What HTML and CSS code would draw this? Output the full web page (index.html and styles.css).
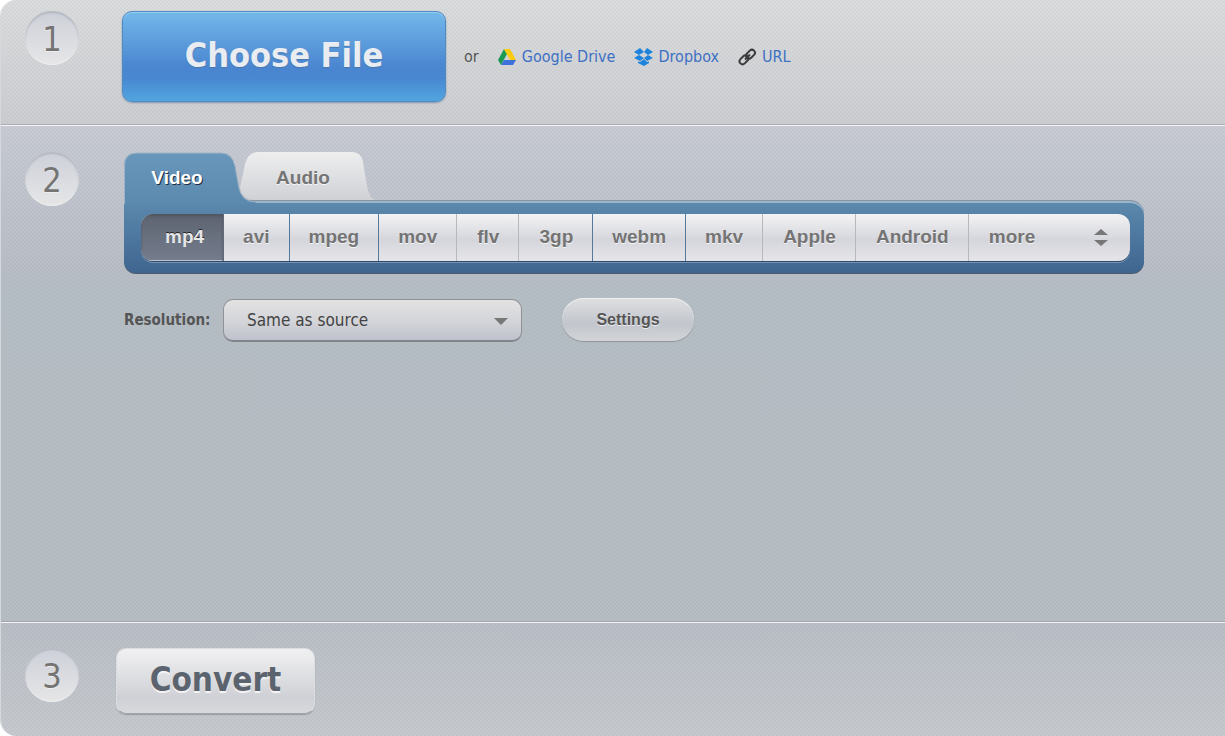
FILE: index.html
```html
<!DOCTYPE html>
<html lang="en">
<head>
  <meta charset="utf-8">
  <title>Video Converter</title>
  <link rel="stylesheet" href="styles.css">
</head>
<body>
<form class="converter">
  <!-- Step 1 -->
  <section class="step step-file">
    <div class="number">1</div>
    <button type="button" class="choose">Choose File</button>
    <div class="sources">
      <span>or</span>
      <a href="#drive">
        <svg width="20" height="18" viewBox="0 0 20 18">
          <path d="M6 1 L0 12 L3 17 L9 6 Z" fill="#1c9a52"/>
          <path d="M6 1 H12 L18 12 H12 Z" fill="#fbcb0d"/>
          <path d="M6 12 H18 L15 17 H3 Z" fill="#3d70dc"/>
        </svg>Google Drive</a>
      <a href="#dropbox">
        <svg width="20" height="18" viewBox="0 0 20 18" fill="#1d83dc">
          <path d="M6 0 L10 4 L5 7 L0 4 Z"/>
          <path d="M13 0 L19 4 L14 7 L10 4 Z"/>
          <path d="M5 7 L10 10 L6 13 L0 10 Z"/>
          <path d="M14 7 L19 10 L13 13 L10 10 Z"/>
          <path d="M10 11 L13 14 L15 13.5 V15 L10 18 L4 15 V13.5 L6 14 Z"/>
        </svg>Dropbox</a>
      <a href="#url">
        <svg width="20" height="18" viewBox="0 0 20 18" fill="none" stroke="#3c3c3c" stroke-width="2">
          <rect x="7.5" y="3.2" width="10" height="6" rx="3" transform="rotate(-45 12.5 6.2)"/>
          <rect x="1" y="8.8" width="10" height="6" rx="3" transform="rotate(-45 6 11.8)"/>
          <path d="M7 11.5 L12 6.5"/>
        </svg>URL</a>
    </div>
  </section>

  <!-- Step 2 -->
  <section class="step step-format">
    <div class="number">2</div>
    <div class="formats">
      <div class="tabs">
        <svg class="tab-shapes" width="260" height="52" viewBox="0 0 260 52">
          <defs>
            <linearGradient id="blue" x1="0" y1="0" x2="0" y2="1">
              <stop offset="0" stop-color="#6997bb"/>
              <stop offset="1" stop-color="#5c89ae"/>
            </linearGradient>
            <linearGradient id="gray" x1="0" y1="0" x2="0" y2="1">
              <stop offset="0" stop-color="#eeeeef"/>
              <stop offset="1" stop-color="#cfd1d5"/>
            </linearGradient>
          </defs>
          <path d="M0 52 V14 Q0 1 13 1 H97 Q108 1 111 14 L115 36 Q118 50 132 50 V52 Z" fill="url(#blue)"/>
          <path d="M.5 52 V14 Q.5 1 13 1 H97 Q108 1 111 14 L115 36 Q118 50 132 50" fill="none" stroke="#9eb3c5"/>
          <path d="M116 36 L121 12 Q124 0 134 0 H228 Q237 0 239 10 L243 34 Q245 46 251 48 H132 Q118 48 116 36 Z" fill="url(#gray)"/>
        </svg>
        <button type="button" class="tab active">Video</button>
        <button type="button" class="tab">Audio</button>
      </div>
      <div class="panel">
        <div class="list">
          <button type="button" class="active">mp4</button>
          <button type="button" class="dark">avi</button>
          <button type="button" class="dark">mpeg</button>
          <button type="button">mov</button>
          <button type="button">flv</button>
          <button type="button" class="dark">3gp</button>
          <button type="button" class="dark">webm</button>
          <button type="button">mkv</button>
          <button type="button">Apple</button>
          <button type="button">Android</button>
          <button type="button" class="more">more
            <svg width="14" height="18" viewBox="0 0 14 18" fill="#777">
              <path d="M7 1 L14 7 H0 Z"/>
              <path d="M0 12 H14 L7 18 Z"/>
            </svg>
          </button>
        </div>
      </div>
      <div class="options">
        <label for="resolution">Resolution:</label>
        <div class="select">
          <select id="resolution">
            <option>Same as source</option>
          </select>
          <svg width="14" height="7" viewBox="0 0 14 7"><path d="M0 0 H14 L7 7 Z" fill="#777"/></svg>
        </div>
        <button type="button" class="settings">Settings</button>
      </div>
    </div>
  </section>

  <!-- Step 3 -->
  <section class="step step-convert">
    <div class="number">3</div>
    <button type="button" class="convert">Convert</button>
  </section>
</form>
</body>
</html>
```
FILE: styles.css
```css
*{
  box-sizing: border-box;
}
body{
  margin: 0;
  background: #fff;
  color: #555;
  font-family: "DejaVu Sans Condensed", Tahoma, sans-serif;
  font-size: 16px;
}
button, select{
  margin: 0;
  border: none;
  font-family: inherit;
  cursor: pointer;
}
svg{
  flex: none;
}
.converter{
  display: flex;
  flex-direction: column;
  min-height: 100vh;
  overflow: hidden;
  border-left: 1px solid #d5d8dc;
  border-radius: 16px 0 0 16px;
}

/* steps */
.step{
  --weave: radial-gradient(rgba(70,80,90,.04) 1px, transparent 1px) 0 0 / 4px 4px, radial-gradient(rgba(70,80,90,.04) 1px, transparent 1px) 2px 2px / 4px 4px;
  display: flex;
  align-items: flex-start;
  padding-left: 24px;
}
.step-file{
  padding-top: 11px;
  padding-bottom: 23px;
  border-bottom: 1px solid #f4f5f6;
  box-shadow: inset 0 -1px #a9abaf;
  background: var(--weave), linear-gradient(#dbdcdd, #cccdd1);
}
.step-format{
  flex: 1;
  padding-top: 26px;
  padding-right: 81px;
  border-bottom: 1px solid #f4f5f6;
  box-shadow: inset 0 -1px #a1a7ac;
  background: var(--weave), linear-gradient(#c8cbd3, #b8bdc6 145px, #b6bec5 165px, #b6bdc3);
}
.step-convert{
  padding-top: 25px;
  padding-bottom: 22px;
  background: var(--weave), linear-gradient(#b9bec6, #c6c9cd);
}
.number{
  flex: none;
  width: 54px;
  height: 54px;
  border-radius: 50%;
  background: linear-gradient(#cdd0d9, #e6e6e7);
  box-shadow: inset 0 2px 2px #b4b7c0, inset 0 -1px 1px #eee;
  color: #747474;
  font-size: 34px;
  line-height: 56px;
  text-align: center;
  text-shadow: 0 1px #eee;
}

/* file sources */
.choose{
  width: 324px;
  height: 91px;
  margin-left: 43px;
  padding-bottom: 4px;
  border: 1px solid #4e8bc5;
  border-radius: 10px;
  background: linear-gradient(#73b8ea, #4a85d0 63%, #4888d1 75%, #51a5de);
  box-shadow: inset 0 1px #9dcdf0, 0 1px 2px #8296ab;
  color: #e9ecf1;
  font-size: 34px;
  font-weight: bold;
  text-shadow: 0 1px 1px #4878ad;
}
.sources{
  display: flex;
  align-items: center;
  gap: 19px;
  height: 91px;
  margin-left: 18px;
}
.sources a{
  display: flex;
  align-items: center;
  gap: 4px;
  color: #3e70c4;
  text-decoration: none;
}

/* format tabs */
.formats{
  flex: 1;
  max-width: 1020px;
  margin-left: 45px;
}
.tabs{
  position: relative;
  display: flex;
  height: 48px;
}
.tab-shapes{
  position: absolute;
  top: 0;
  left: 0;
  z-index: 1;
}
.tab{
  position: relative;
  z-index: 2;
  width: 126px;
  padding: 4px 0 0;
  background: none;
  color: #747474;
  font-family: "Liberation Sans", Arial, sans-serif;
  font-size: 19px;
  font-weight: bold;
  text-shadow: 0 1px #f5f5f5;
}
.tab.active{
  width: 116px;
  padding-right: 10px;
  color: #fff;
  text-shadow: 1px 1px #1d3044;
}
.panel{
  padding: 13px 14px 12px 17px;
  border-top: 1px solid #8794a2;
  border-bottom: 1px solid #4b5b6c;
  border-radius: 0 14px 12px 12px;
  background: linear-gradient(#5c89ae, #3f658f);
  box-shadow: inset 0 2px #9bb5ca;
}
.list{
  display: flex;
  height: 47px;
  overflow: hidden;
  border-radius: 12px;
  background: linear-gradient(#f3f3f4, #d5d6dc 55%, #e5e5e9);
  box-shadow: 0 1px #2d4b6d, 0 2px #7894b2;
}
.list button{
  margin-right: 1px;
  padding: 0 19px 2px;
  border-right: 1px solid #b6b8bd;
  background: none;
  color: #747474;
  font-family: "Liberation Sans", Arial, sans-serif;
  font-size: 19px;
  font-weight: bold;
  text-shadow: 0 1px #f5f5f5;
}
.list .dark{
  margin-right: 0;
  border-color: #53799c;
}
.list .active{
  margin-right: 0;
  padding-left: 24px;
  border-color: #646b78;
  background: linear-gradient(#5d636f, #757d8e);
  box-shadow: inset 0 2px 3px #505661, inset 0 -1px #c4c9d0;
  color: #e6e7e9;
  text-shadow: 0 -1px #222;
}
.list .more{
  display: flex;
  flex: 1;
  align-items: center;
  justify-content: space-between;
  padding-right: 21px;
  border: none;
}

/* options */
.options{
  display: flex;
  align-items: center;
  margin-top: 23px;
}
.options label{
  width: 99px;
  font-size: 15px;
  font-weight: bold;
}
.select{
  position: relative;
  width: 299px;
  margin-top: 2px;
}
.select select{
  display: block;
  width: 100%;
  height: 43px;
  padding: 0 40px 0 23px;
  appearance: none;
  border: 1px solid #8f9196;
  border-bottom: 2px solid #83858c;
  border-radius: 10px;
  background: linear-gradient(#e2e2e3, #d5d6da 50%, #bfc2cd);
  color: #444;
  font-size: 17px;
}
.select svg{
  position: absolute;
  top: 19px;
  right: 14px;
  pointer-events: none;
}
.settings{
  width: 132px;
  height: 43px;
  margin-left: 40px;
  border-radius: 22px;
  background: linear-gradient(#dedfe0, #c2c6cd 60%, #d2d4d7);
  box-shadow: inset 0 1px #eee, 0 1px 1px #8e949a;
  color: #555;
  font-family: "Liberation Sans", Arial, sans-serif;
  font-size: 16px;
  font-weight: bold;
  text-shadow: 0 1px #eee;
}

/* convert */
.convert{
  width: 199px;
  height: 66px;
  margin-left: 37px;
  padding-bottom: 4px;
  border: 1px solid #dcdde0;
  border-bottom-color: #a1a5ab;
  border-radius: 10px;
  background: linear-gradient(#f1f1f2, #cfd1d6 75%, #d8d9dc);
  box-shadow: 0 1px 1px #989ca2;
  color: #5b646e;
  font-size: 33px;
  font-weight: bold;
  text-shadow: 0 2px #f3f3f3;
}
```
